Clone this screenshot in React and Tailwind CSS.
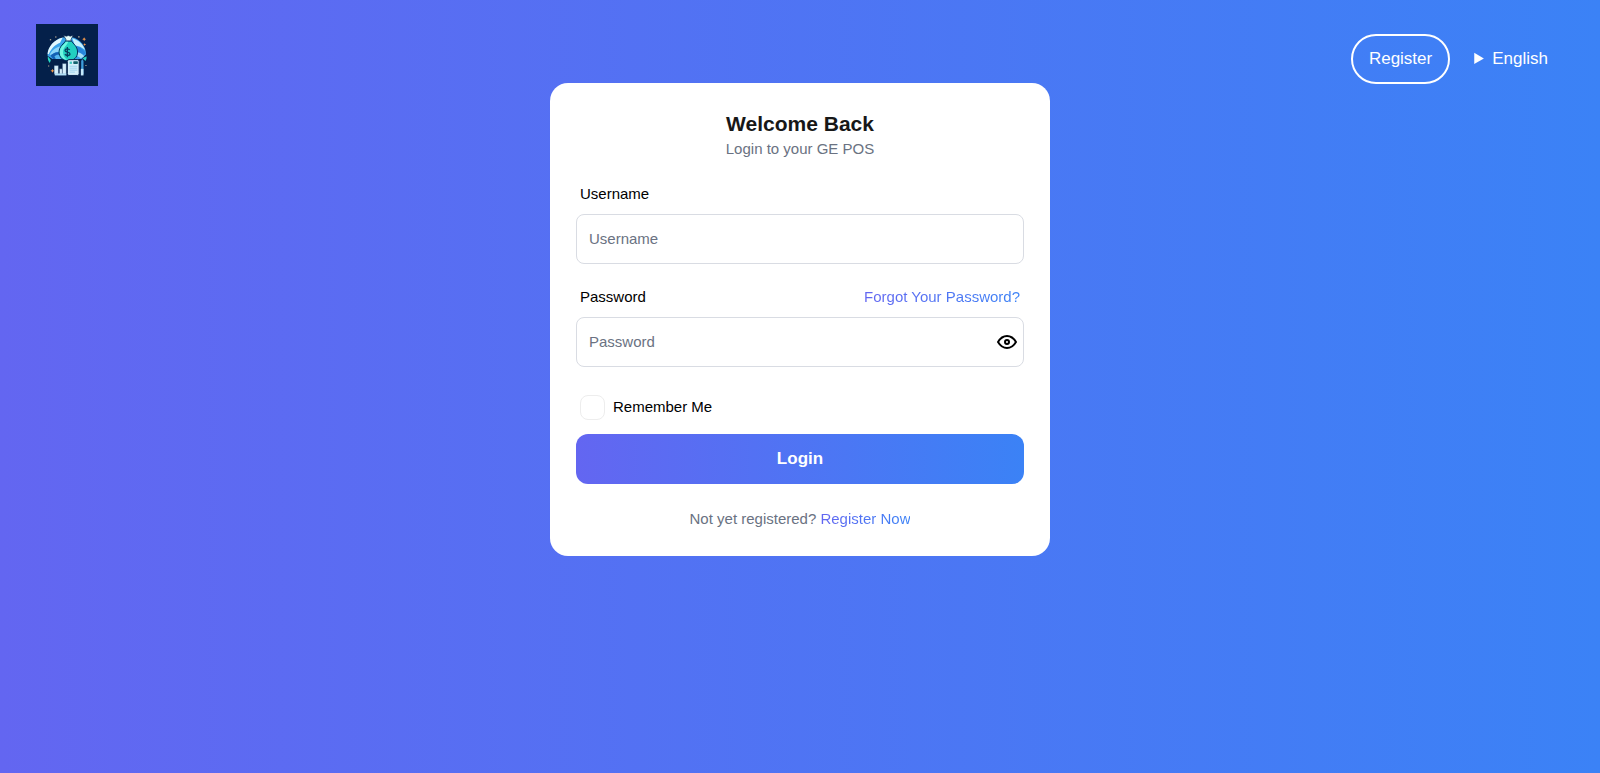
import { useState } from "react";
import { TbEye, TbEyeOff } from "react-icons/tb";

function Logo() {
    return (
        <svg viewBox="0 0 188 188" className="size-[62px]" role="img" aria-label="GE POS">
            <rect width="188" height="188" fill="#04204a" />
            <path d="M35 96c0-26 20-50 50-56h24c24 5 42 26 43 52l-14 14H50z" fill="#3aa3ea" />
            <path d="M35 92c1-24 20-44 46-51l-8 16c-14 6-26 16-34 34z" fill="#e2f8fe" />
            <path d="M42 92c6-12 18-22 32-24l-4 16c-10 0-18 4-24 12z" fill="#8dd6f8" />
            <path d="M44 96c8-8 18-12 28-9l6 19H52z" fill="#1460b4" />
            <path d="M56 98c4-4 10-6 16-4l4 12H60z" fill="#56b6ee" />
            <path d="M110 43c18 5 32 17 39 36-10-9-20-13-31-14z" fill="#c9f0fc" />
            <path d="M119 68c14 0 26 8 32 22l-14 6-12-6z" fill="#2684dc" />
            <path d="M124 86c8 0 16 5 22 12l-10 6-12-8z" fill="#a5e0f8" />
            <path d="M36 98l9 11-3 9c-5-5-7-12-6-20zM153 98c1 6 0 10-3 14l-9-8z" fill="#27d6c2" />
            <path d="M83 34l9 3 6-2 6 2 9-3-7 13 1 5H90l1-5z" fill="#e6fdfb" stroke="#04204a" strokeWidth="2" />
            <path
                d="M89 52h19c3 7 18 15 18 33 0 17-12 26-28 26S70 102 70 85c0-18 16-26 19-33z"
                fill="#22d0c0"
                stroke="#04325c"
                strokeWidth="3"
            />
            <path d="M90 54h8c-4 12-16 16-16 32 0 10 5 17 12 23-13-1-22-10-22-24 0-17 15-23 18-31z" fill="#6ff5e0" />
            <path d="M102 79c-2-5-14-5-14 1 0 7 15 4 15 11 0 6-13 6-15 0M95 70v31" fill="none" stroke="#063f5f" strokeWidth="4" />
            <path d="M55 126h13v26H55zM71 136h9v16h-9zM80 120h12v32H80z" fill="#d5effc" stroke="#04204a" strokeWidth="1" />
            <path d="M57 150h35v6H57z" fill="#b2e0f8" />
            <rect x="95" y="108" width="36" height="48" rx="5" fill="#d4effb" stroke="#04204a" strokeWidth="3" />
            <path d="M102 114h7v7h-7z" fill="#3ac4bd" />
            <rect x="113" y="113" width="14" height="8" rx="2" fill="#14636f" />
            <path d="M102 128h23M102 134h23M102 140h23M102 146h16" stroke="#84c4e6" strokeWidth="2" />
            <path d="M137 112l3-6 4 6v40h-7z" fill="#3d9ddb" />
            <path d="M136 136h8v20h-8z" fill="#c6e9fa" />
            <path
                d="M146 40l2 4 4 2-4 2-2 4-2-4-4-2 4-2zM50 136l2 4 4 2-4 2-2 4-2-4-4-2 4-2zM147 58l2 3 3 1-3 2-2 3-1-3-3-2 3-1z"
                fill="#f0974a"
            />
            <path d="M42 46h4v3h-4zM58 38h4v3h-4zM128 37h4v4h-4zM37 126h3v3h-3zM150 124h3v3h-3z" fill="#d8c0a0" />
        </svg>
    );
}

function Header() {
    return (
        <header className="flex h-[83px] items-start justify-between px-9 pt-6">
            <a href="#">
                <Logo />
            </a>
            <div className="mt-[10px] flex items-center gap-2 text-[17px] text-white">
                <button type="button" className="h-[50px] rounded-full border-2 border-white px-4">
                    Register
                </button>
                <details className="px-4">
                    <summary className="cursor-pointer">English</summary>
                </details>
            </div>
        </header>
    );
}

function Field({ id, label, type, action, children }) {
    return (
        <div className="flex flex-col gap-[10px]">
            <div className="flex justify-between px-1 leading-5">
                <label htmlFor={id}>{label}</label>
                {action}
            </div>
            <div className="relative">
                <input
                    id={id}
                    type={type}
                    placeholder={label}
                    className="h-[50px] w-full rounded-lg border border-[#d9dce3] px-3 pb-[2px] placeholder:text-gray-500"
                />
                {children}
            </div>
        </div>
    );
}

export default function App() {
    const [visible, setVisible] = useState(false);

    return (
        <div className="min-h-screen bg-linear-to-r/srgb from-[#6366f1] to-[#3b82f6] font-['Liberation_Sans',Arial,sans-serif]">
            <Header />
            <main className="flex justify-center">
                <form className="w-full max-w-[500px] rounded-[18px] bg-white px-[26px] pt-[27px] pb-[26px] text-[15px] text-black">
                    <div className="text-center">
                        <h1 className="text-[21px] leading-7 font-bold text-[#171717]">Welcome Back</h1>
                        <p className="leading-[22px] text-gray-500">Login to your GE POS</p>
                    </div>
                    <div className="mt-6 flex flex-col gap-[23px]">
                        <Field id="username" label="Username" type="text" />
                        <Field
                            id="password"
                            label="Password"
                            type={visible ? "text" : "password"}
                            action={
                                <a href="#" className="bg-linear-to-r/srgb from-[#6366f1] to-[#3b82f6] bg-clip-text text-transparent">
                                    Forgot Your Password?
                                </a>
                            }
                        >
                            <button
                                type="button"
                                aria-label="Show password"
                                onClick={() => setVisible(!visible)}
                                className="absolute inset-y-0 right-[5px]"
                            >
                                {visible ? <TbEyeOff className="size-6" /> : <TbEye className="size-6" />}
                            </button>
                        </Field>
                    </div>
                    <div className="mt-7 flex items-center gap-2 px-1">
                        <input
                            id="remember"
                            type="checkbox"
                            className="size-[25px] appearance-none rounded-lg border border-[#ededed] checked:bg-indigo-500"
                        />
                        <label htmlFor="remember">Remember Me</label>
                    </div>
                    <button
                        type="submit"
                        className="mt-[14px] h-[50px] w-full rounded-xl bg-linear-to-r/srgb from-[#6366f1] to-[#3b82f6] text-[17px] font-bold text-white"
                    >
                        Login
                    </button>
                    <p className="mt-6 text-center leading-[22px] text-gray-500">
                        Not yet registered?{" "}
                        <a href="#" className="bg-linear-to-r/srgb from-[#6366f1] to-[#3b82f6] bg-clip-text text-transparent">
                            Register Now
                        </a>
                    </p>
                </form>
            </main>
        </div>
    );
}
